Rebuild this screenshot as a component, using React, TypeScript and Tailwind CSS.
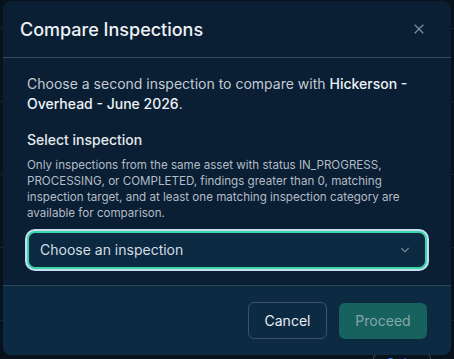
import { ChevronDown, X } from "lucide-react";

const rows = [0, 1, 2, 3, 4];

export default function App() {
  return (
    <div
      className="relative h-[359px] w-[454px] overflow-hidden bg-[#07121c]"
      style={{ fontFamily: "Inter, 'Noto Sans', sans-serif" }}
    >
      {/* page behind the dialog */}
      <div className="pt-[28px] opacity-60">
        {rows.map((r) => (
          <div key={r} className="h-[73px] border-t border-[#1f2f3e]" />
        ))}
      </div>
      <div className="absolute left-[373px] top-[354px] h-[20px] w-[58px] rounded border border-[#3a4a5c] px-3 text-[14px] leading-[18px] text-[#3b6fd8]">
        Solar
      </div>

      {/* dialog */}
      <div className="absolute left-[3px] top-[1px] w-[448px] overflow-hidden rounded-lg bg-[#0a1f33]">
        <div className="flex h-[57px] items-center justify-between border-b border-[#3a4d60] pl-[17px] pr-[24px]">
          <h2 className="pt-[1px] text-[18px] font-medium text-[#eef2f6]">Compare Inspections</h2>
          <X className="h-[16px] w-[16px] text-[#8393a3]" strokeWidth={1.6} />
        </div>

        <div className="px-6 pb-4 pt-4">
          <p className="text-sm leading-5 text-[#c3cbd4]">
            Choose a second inspection to compare with{" "}
            <span className="font-medium text-[#eef2f6]">Hickerson - Overhead - June 2026</span>.
          </p>

          <div className="mt-4 text-sm font-medium leading-5 text-[#e6eaef]">Select inspection</div>
          <p className="mt-[7px] text-[11.6px] leading-4 text-[#b3bcc6]">
            Only inspections from the same asset with status IN_PROGRESS, PROCESSING, or COMPLETED, findings
            greater than 0, matching inspection target, and at least one matching inspection category are
            available for comparison.
          </p>

          <div className="mt-[10px] flex h-[38px] items-center justify-between rounded-lg border-2 border-[#3ad6a8] bg-[#0b2a42] pl-[11px] pr-[13px] ring-2 ring-[#c4ddf2]">
            <span className="text-sm text-[#d6dce2]">Choose an inspection</span>
            <ChevronDown className="h-[14px] w-[14px] text-[#6d7e8f]" strokeWidth={2} />
          </div>
        </div>

        <div className="flex items-center justify-end gap-3 border-t border-[#33475a] bg-[#0c2a42] px-6 py-4">
          <button className="h-[37px] w-[79px] rounded-md border border-[#3c5266] text-sm text-[#e8edf2]">
            Cancel
          </button>
          <button className="h-[36px] w-[88px] rounded-md bg-[#17625f] text-sm text-[#86a7a6]">
            Proceed
          </button>
        </div>
      </div>
    </div>
  );
}
